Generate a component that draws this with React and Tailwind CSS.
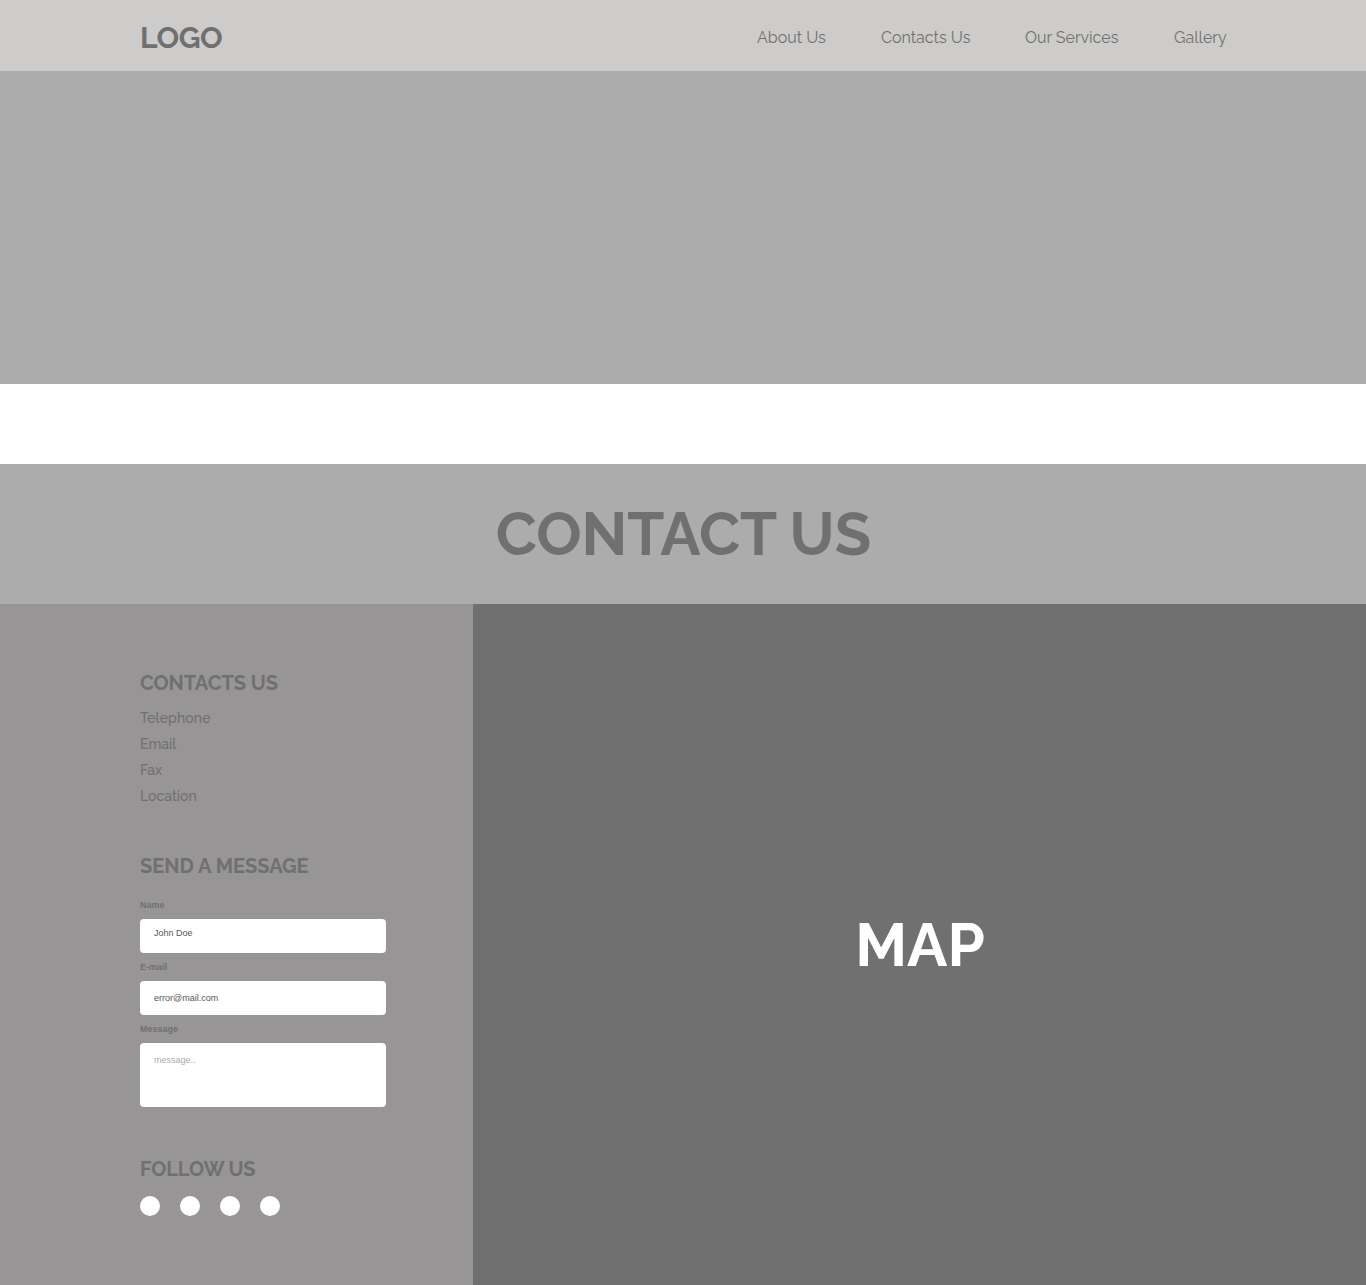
const nav = [["About Us", "w-[69px]"], ["Contacts Us", "w-[89px]"], ["Our Services", "w-[94px]"], ["Gallery", "w-[52px]"]];
const raleway = "font-['Raleway',Lato,sans-serif]";

function Heading({ children, className }) {
  return <h2 className={"whitespace-nowrap text-[20px] leading-6 font-bold " + className}>{children}</h2>;
}

export default function App() {
  return (
    <div className={"h-[1285px] w-[1366px] overflow-hidden bg-white text-[#707070] " + raleway}>
      <header className="flex h-[71px] items-center justify-between bg-[#cdccca] pl-[140px] pr-[140px]">
        <div className="pt-1 text-[30px] leading-9 font-bold tracking-[-0.45px]">LOGO</div>
        <nav className="flex gap-[55px] pt-[5px]">
          {nav.map(([label, w]) => (
            <a key={label} className={"whitespace-nowrap text-[16px] leading-6 " + w}>{label}</a>
          ))}
        </nav>
      </header>
      <section className="h-[313px] bg-[#acacac]" />
      <section className="mt-20 flex h-[140px] items-center justify-center bg-[#acacac]">
        <h1 className="pl-px text-[60px] leading-[60px] font-bold tracking-[-0.1px]">CONTACT US</h1>
      </section>
      <main className="flex h-[681px]">
        <aside className="w-[473px] bg-[#979595] pl-[140px] pt-[67px]">
          <Heading className="tracking-[-0.03px]">CONTACTS US</Heading>
          <ul className="mt-[10px] text-[14px] leading-[26px] font-medium">
            <li className="tracking-[0.13px]">Telephone</li>
            <li>Email</li>
            <li>Fax</li>
            <li>Location</li>
          </ul>
          <Heading className="mt-[45px]">SEND A MESSAGE</Heading>
          <form className="mt-[21px] w-[246px] font-['Liberation_Sans',sans-serif] text-[9px]">
            <label className="block h-5 leading-[12px] font-bold">Name</label>
            <div className="h-[34px] rounded-[4px] bg-white pl-[14px] pt-2 leading-3 text-[#555]">John Doe</div>
            <label className="block h-7 pt-2 leading-[12px] font-bold">E-mail</label>
            <div className="h-[34px] rounded-[4px] bg-white pl-[14px] pt-[11px] leading-3 text-[#555]">error@mail.com</div>
            <label className="block h-7 pt-2 leading-[12px] font-bold">Message</label>
            <div className="h-16 rounded-[4px] bg-white pl-[14px] pt-[11px] leading-3 text-[#aaa]">message..</div>
          </form>
          <Heading className="mt-[50px] tracking-[-0.1px]">FOLLOW US</Heading>
          <div className="mt-[15px] flex gap-5">
            {[0, 1, 2, 3].map((i) => <span key={i} className="size-5 rounded-full bg-white" />)}
          </div>
        </aside>
        <section className="flex flex-1 items-center justify-center bg-[#707070]">
          <div className="pl-px text-[60px] leading-[60px] font-bold text-white">MAP</div>
        </section>
      </main>
    </div>
  );
}
